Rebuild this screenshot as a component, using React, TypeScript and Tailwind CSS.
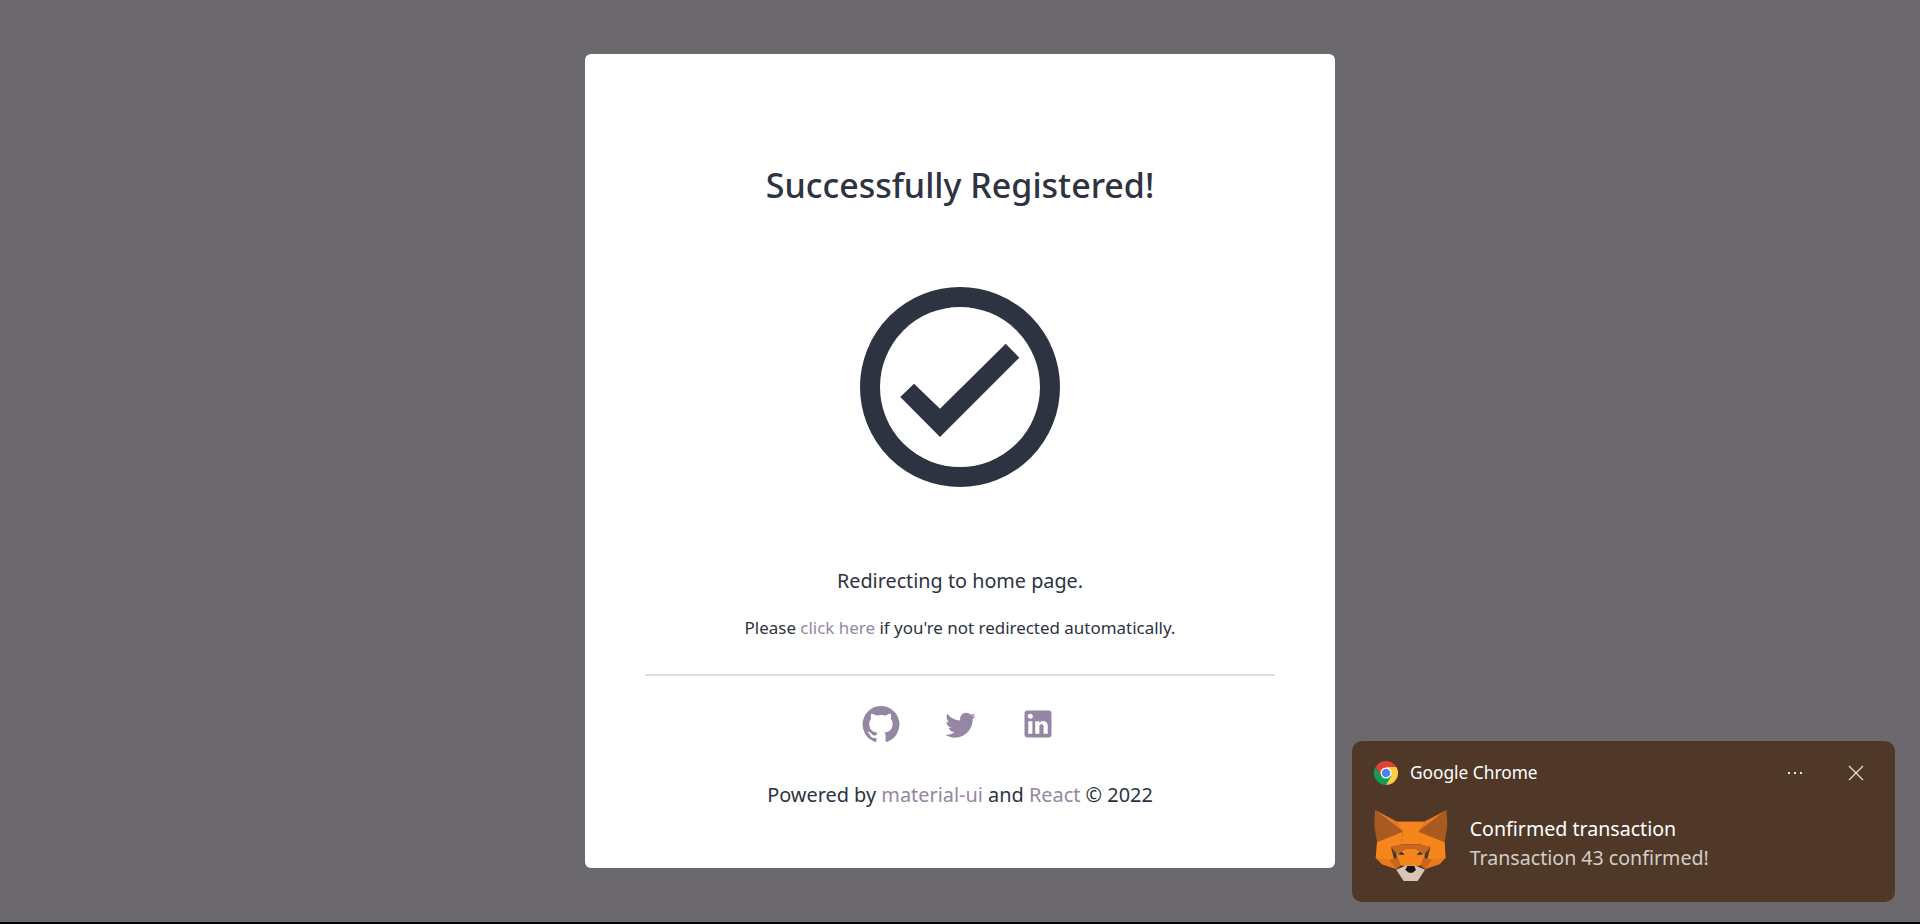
const font = "[font-family:'Noto_Sans',sans-serif]";

function CheckMark() {
  return (
    <svg width="200" height="200" viewBox="0 0 200 200">
      <circle cx="100" cy="100" r="90" fill="none" stroke="#2d3341" strokeWidth="20" />
      <polygon points="40.3,110 54,96.7 80,121.7 145.7,56.7 159.3,70.7 80,150" fill="#2d3341" />
    </svg>
  );
}

function Github() {
  return (
    <svg className="w-10 h-10" viewBox="0 0 24 24" fill="#9587a3">
      <path d="M12 1.27a11 11 0 00-3.48 21.46c.55.09.73-.28.73-.55v-1.84c-3.03.64-3.67-1.46-3.67-1.46-.55-1.29-1.28-1.65-1.28-1.65-.92-.65.1-.65.1-.65 1.1 0 1.73 1.1 1.73 1.1.92 1.65 2.57 1.2 3.21.92a2 2 0 01.64-1.47c-2.47-.27-5.04-1.19-5.04-5.5 0-1.1.46-2.1 1.2-2.84a3.76 3.76 0 010-2.93s.91-.28 3.11 1.1c1.8-.49 3.7-.49 5.5 0 2.1-1.38 3.02-1.1 3.02-1.1a3.76 3.76 0 010 2.93c.83.74 1.2 1.74 1.2 2.94 0 4.21-2.57 5.13-5.04 5.4.45.37.82.92.82 2.02v3.03c0 .27.1.64.73.55A11 11 0 0012 1.27" />
    </svg>
  );
}

function Twitter() {
  return (
    <svg className="w-[35px] h-[35px]" viewBox="0 0 24 24" fill="#9587a3">
      <path d="M22.46 6c-.77.35-1.6.58-2.46.69.88-.53 1.56-1.37 1.88-2.38-.83.5-1.75.85-2.72 1.05C18.37 4.5 17.26 4 16 4c-2.35 0-4.27 1.92-4.27 4.29 0 .34.04.67.11.98C8.28 9.09 5.11 7.38 3 4.79c-.37.63-.58 1.37-.58 2.15 0 1.49.75 2.81 1.91 3.56-.71 0-1.37-.2-1.95-.5v.03c0 2.08 1.48 3.82 3.44 4.21a4.22 4.22 0 0 1-1.93.07 4.28 4.28 0 0 0 4 2.98 8.521 8.521 0 0 1-5.33 1.84c-.34 0-.68-.02-1.02-.06C3.44 20.29 5.7 21 8.12 21 16 21 20.33 14.46 20.33 8.79c0-.19 0-.37-.01-.56.84-.6 1.56-1.36 2.14-2.23z" />
    </svg>
  );
}

function Linkedin() {
  return (
    <svg className="w-9 h-9" viewBox="0 0 24 24" fill="#9587a3">
      <path d="M19 3a2 2 0 0 1 2 2v14a2 2 0 0 1-2 2H5a2 2 0 0 1-2-2V5a2 2 0 0 1 2-2h14m-.5 15.5v-5.3a3.26 3.26 0 0 0-3.26-3.26c-.85 0-1.84.52-2.32 1.3v-1.11h-2.79v8.37h2.79v-4.93c0-.77.62-1.4 1.39-1.4a1.4 1.4 0 0 1 1.4 1.4v4.93h2.79M6.88 8.56a1.68 1.68 0 0 0 1.68-1.68c0-.93-.75-1.69-1.68-1.69a1.69 1.69 0 0 0-1.69 1.69c0 .93.76 1.68 1.69 1.68m1.39 9.94v-8.37H5.5v8.37h2.77z" />
    </svg>
  );
}

function ChromeLogo() {
  return (
    <svg width="24" height="24" viewBox="0 0 48 48">
      <path d="M24 24 L44.8 12 A24 24 0 0 0 3.2 12 L13.6 30 Z" fill="#db4437" />
      <path d="M24 24 L13.6 30 L3.2 12 A24 24 0 0 0 24 48 L34.4 30 Z" fill="#0f9d58" />
      <path d="M24 24 L34.4 30 L24 48 A24 24 0 0 0 44.8 12 L24 12 Z" fill="#ffcd40" />
      <circle cx="24" cy="24" r="11" fill="#fff" />
      <circle cx="24" cy="24" r="8.6" fill="#4285f4" />
    </svg>
  );
}

function Fox() {
  return (
    <svg width="73.67" height="73" viewBox="25 12 221 219" className="shrink-0">
      {/* forehead */}
      <polygon points="28,15 95,50 175,50 243,15 160,82 112,82" fill="#e8791e" />
      <polygon points="95,50 175,50 160,82 165,118 105,118 112,82" fill="#f6851b" />
      {/* ears */}
      <polygon points="28,15 26,62 34,112 72,112 112,78" fill="#a85a20" />
      <polygon points="243,15 245,62 237,112 198,112 158,78" fill="#a85a20" />
      {/* cheeks */}
      <polygon points="34,112 112,80 105,120 76,126 92,192 52,178 30,158" fill="#f6851b" />
      <polygon points="237,112 158,80 165,120 194,126 178,192 218,178 240,158" fill="#f6851b" />
      {/* brow band */}
      <polygon points="76,126 105,118 165,118 194,126 178,146 150,132 120,132 92,146" fill="#c9651c" />
      {/* muzzle */}
      <polygon points="92,146 120,132 150,132 178,146 172,180 150,184 120,184 98,180" fill="#f6851b" />
      {/* lower cheek shading */}
      <polygon points="30,158 70,164 92,192 48,178" fill="#e8791e" />
      <polygon points="240,158 200,164 178,192 222,178" fill="#e8791e" />
      <polygon points="70,164 98,158 104,182 92,192" fill="#c9651c" />
      <polygon points="200,164 172,158 166,182 178,192" fill="#c9651c" />
      {/* snout */}
      <polygon points="92,194 120,182 150,182 178,194 156,228 114,228" fill="#d9c5b6" />
      <polygon points="125,183 146,183 151,195 141,203 130,203 119,195" fill="#161616" />
      {/* eyes */}
      <polygon points="96,148 108,140 117,150 106,149" fill="#233447" />
      <polygon points="174,148 162,140 153,150 164,149" fill="#233447" />
    </svg>
  );
}

export default function App() {
  return (
    <div className={`${font} relative h-[924px] bg-black overflow-hidden`}>
      <div className="h-[922px] bg-[#6b686e] flex justify-center pt-[54px]">
        <main className="w-[750px] h-[814px] bg-white rounded-md flex flex-col items-center pt-[107px] text-[#2d3341]">
          <h1 className="text-[34px] leading-[48px] font-medium">Successfully Registered!</h1>
          <div className="mt-[78px]">
            <CheckMark />
          </div>
          <p className="mt-[80px] text-[19.8px] leading-7">Redirecting to home page.</p>
          <p className="mt-[21px] text-[16.95px] leading-6">
            Please <a className="text-[#9587a3]">click here</a> if you're not redirected automatically.
          </p>
          <div className="mt-[34px] w-[630px] h-0.5 bg-[#dfdfe0]" />
          <div className="mt-[28px] flex items-center gap-[42px] pr-1">
            <Github />
            <Twitter />
            <Linkedin />
          </div>
          <p className="mt-[37px] text-[19.9px] leading-7">
            Powered by <a className="text-[#9587a3]">material-ui</a> and <a className="text-[#9587a3]">React</a> © 2022
          </p>
        </main>
      </div>

      <aside className="absolute left-[1352px] top-[741px] w-[543px] h-[161px] bg-[#4f3828] rounded-[10px] pt-[20px] pl-[22px] pr-[31px]">
        <div className="flex items-center h-6">
          <ChromeLogo />
          <span className="ml-3 text-[17.3px] text-white">Google Chrome</span>
          <span className="ml-auto flex gap-1 mr-[4px]">
            <i className="w-[2px] h-[2px] bg-[#e8e4e0]" />
            <i className="w-[2px] h-[2px] bg-[#e8e4e0]" />
            <i className="w-[2px] h-[2px] bg-[#e8e4e0]" />
          </span>
          <svg className="ml-[42px]" width="16" height="16" viewBox="0 0 16 16" stroke="#e8e4e0" strokeWidth="1.2">
            <path d="M1 1 L15 15 M15 1 L1 15" />
          </svg>
        </div>
        <div className="flex items-start mt-[24px]">
          <Fox />
          <div className="ml-[22px] pt-[6px]">
            <div className="text-[19.6px] leading-[28px] text-white">Confirmed transaction</div>
            <div className="text-[19.6px] leading-[28px] mt-px text-[#d3cdc8]">Transaction 43 confirmed!</div>
          </div>
        </div>
      </aside>
    </div>
  );
}
